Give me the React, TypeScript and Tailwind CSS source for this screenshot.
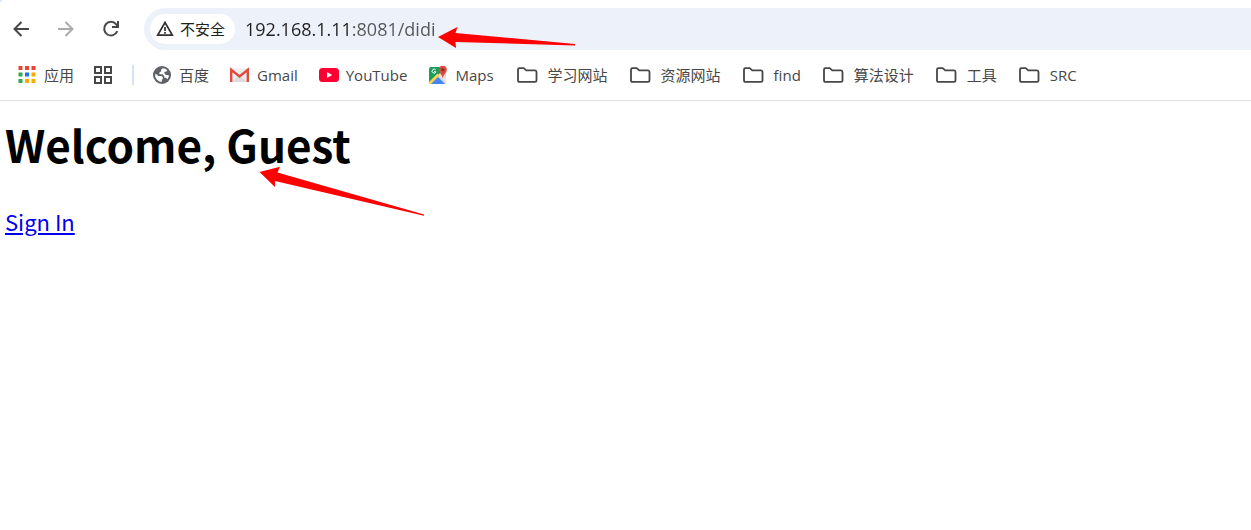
import type { ReactNode } from "react";

const folders = ["学习网站", "资源网站", "find", "算法设计", "工具", "SRC"];

const appColors = [
  "#ea4335", "#ea4335", "#ea4335",
  "#34a853", "#1a73e8", "#fbab05",
  "#34a853", "#fbab05", "#fbab05",
];

const AppsIcon = () => (
  <svg width="18" height="18" viewBox="0 0 18 18">
    {appColors.map((color, index) => (
      <rect
        key={index}
        x={(index % 3) * 6.5 + 0.5}
        y={Math.floor(index / 3) * 6.5}
        width="4"
        height="4"
        fill={color}
      />
    ))}
  </svg>
);

const TabGroupsIcon = () => (
  <svg width="20" height="20" viewBox="0 0 20 20" fill="none" stroke="#474747" strokeWidth="2">
    <rect x="2" y="2" width="6" height="6" />
    <rect x="12" y="2" width="6" height="6" />
    <rect x="2" y="12" width="6" height="6" />
    <rect x="12" y="12" width="6" height="6" />
  </svg>
);

const GlobeIcon = () => (
  <svg width="20" height="20" viewBox="0 0 20 20">
    <circle cx="10" cy="10" r="9" fill="#5f6368" />
    <path
      d="M10.8 3.2 9.2 4.4v1.8L7.4 7.4v1.8h3.2l1.7 1.7v1.8h1.8l1.2 1.6A6.9 6.9 0 0 0 17 10.6l-1.3-.7-1.7.2-1.6-1.7V6.8h1.7l1.2-1.6A7 7 0 0 0 10.8 3.2ZM3.1 9.2A7 7 0 0 0 9.8 17v-2.1l1-1.1v-1.7L9.1 11H6.3L4.5 9.2Z"
      fill="#fff"
    />
  </svg>
);

const GmailIcon = () => (
  <svg width="20" height="20" viewBox="0 0 20 20">
    <path d="M1 3.500h17V17H1z" fill="#eeeeee" />
    <path d="m2 17 7.500-7 7.500 7z" fill="#dcdcdc" />
    <path d="M1.200 17V4.800L9.500 11.500l8.300-6.700V17" fill="none" stroke="#de4b3f" strokeWidth="2.4" />
  </svg>
);

const YouTubeIcon = () => (
  <svg width="20" height="20" viewBox="0 0 20 20">
    <rect y="3" width="20" height="14" rx="3.5" fill="#ff0033" />
    <path d="M8 7v6l5.2-3z" fill="#fff" />
  </svg>
);

const MapsIcon = () => (
  <svg width="20" height="20" viewBox="0 0 20 20">
    <rect x="1" y="2" width="17" height="17" rx="1.5" fill="#d7d7d7" />
    <path d="M2.5 2H13v5L2 18.5 1 17V3.500z" fill="#1a9d5a" />
    <path d="m1 17 8.5-8.5 2 2L3.5 19H2.2Q1 19 1 17z" fill="#ffd04b" />
    <path d="m3 19 7-7 7 7z" fill="#4285f4" />
    <path d="m11 11 3-3 4 4v6z" fill="#e4e4e4" />
    <path d="M7.7 4.9A2 2 0 1 0 8 6.8H6" fill="none" stroke="#fff" strokeWidth="1" />
    <path d="M14.8.8a4 4 0 0 0-4 4c0 3.4 3.4 4.3 4 8.6.6-4.3 4-5.2 4-8.6a4 4 0 0 0-4-4z" fill="#dd4b3e" />
    <circle cx="14.8" cy="4.8" r="1.5" fill="#7c2a21" />
  </svg>
);

const FolderIcon = () => (
  <svg width="22" height="20" viewBox="0 0 22 20" fill="none" stroke="#474747" strokeWidth="1.800">
    <path d="M2 4.500Q2 3.200 3.500 3.200h4.300l2.400 2.200h8.800Q20.500 5.400 20.500 7v8.500q0 1.300-1.500 1.300H3.500Q2 16.800 2 15.500z" strokeLinejoin="round" />
  </svg>
);

const sites = [
  { name: "百度", icon: <GlobeIcon /> },
  { name: "Gmail", icon: <GmailIcon /> },
  { name: "YouTube", icon: <YouTubeIcon /> },
  { name: "Maps", icon: <MapsIcon /> },
];

const Bookmark = ({ icon, name }: { icon: ReactNode; name: string }) => (
  <a href="#" className="flex shrink-0 items-center gap-[7px]">
    {icon}
    {name}
  </a>
);

export default function App() {
  return (
    <div className="relative min-h-screen overflow-hidden bg-white font-['Open_Sans','Noto_Sans_CJK_SC',sans-serif]">
      <header className="bg-[#d3e3fd]">
        <div className="rounded-tl border-b border-[#dfe1e5] bg-white">
          {/* Toolbar */}
          <div className="flex items-center pt-2">
            <nav className="flex w-36 shrink-0 gap-[25px] pl-[11px]">
              <button aria-label="Back" className="size-5">
                <svg viewBox="0 0 20 20" fill="none" stroke="#474747" strokeWidth="2">
                  <path d="M18 10H4M10.5 3 3.5 10l7 7" />
                </svg>
              </button>
              <button aria-label="Forward" disabled className="size-5">
                <svg viewBox="0 0 20 20" fill="none" stroke="#ababab" strokeWidth="2">
                  <path d="M2 10h14M9.500 3l7 7-7 7" />
                </svg>
              </button>
              <button aria-label="Reload" className="size-5">
                <svg viewBox="0 0 20 20" fill="none" stroke="#474747" strokeWidth="2">
                  <path d="M16.300 12.200A6.800 6.800 0 1 1 15.200 5.300L17 7.500M17 2v6h-6" />
                </svg>
              </button>
            </nav>

            <div className="flex h-[42px] min-w-0 flex-1 items-center gap-[10px] rounded-l-full bg-[#ecf1fa] pl-1.5">
              <button className="flex h-[30px] shrink-0 items-center gap-[6px] rounded-full bg-white pl-1.5 pr-[10px] text-[15px] text-[#1f1f1f]">
                <svg width="18" height="18" viewBox="0 0 18 18" fill="none" stroke="#303030" strokeWidth="1.7">
                  <path d="M9 2.500 16.300 15.200H1.700z" />
                  <path d="M9 7v4M9 12v1.700" />
                </svg>
                不安全
              </button>
              {/* Host is darker than the port and path */}
              <input
                aria-label="Address"
                defaultValue="192.168.1.11:8081/didi"
                className="min-w-0 flex-1 bg-[linear-gradient(to_right,#1f1f1f_105px,#555555_105px)] bg-clip-text text-lg text-transparent outline-none"
              />
            </div>
          </div>

          {/* Bookmarks bar */}
          <div className="flex h-[50px] items-center whitespace-nowrap pl-[18px] text-[15px] text-[#474747]">
            <a href="#" className="flex shrink-0 items-center gap-2">
              <AppsIcon />
              应用
            </a>
            <button aria-label="Tab groups" className="mx-[19px] shrink-0">
              <TabGroupsIcon />
            </button>
            <div className="mr-[18px] h-5 w-0.5 shrink-0 bg-[#d3e3fd]" />
            <div className="flex gap-[21px]">
              {sites.map((site) => (
                <Bookmark key={site.name} icon={site.icon} name={site.name} />
              ))}
            </div>
            <div className="ml-[22px] flex gap-[21px]">
              {folders.map((folder) => (
                <a key={folder} href="#" className="flex shrink-0 items-center gap-[10px]">
                  <FolderIcon />
                  {folder}
                </a>
              ))}
            </div>
          </div>
        </div>
      </header>

      <main className="px-[5px] pt-3 font-['Noto_Sans_CJK_SC',sans-serif]">
        <h1 className="text-[44px]/[62px] font-bold text-black">Welcome, Guest</h1>
        <p className="mt-[30px] text-[22px]/[32px]">
          <a href="#" className="text-[#0000ee] underline">Sign In</a>
        </p>
      </main>

      {/* Annotation arrows */}
      <svg className="pointer-events-none absolute left-0 top-0" width="600" height="230" fill="#ff0000" aria-hidden="true">
        <path d="M438 37 457.500 27 455.500 33 575 44V45.500L455.500 42 456 48z" />
        <path d="M259.500 172 280 166.700 277.500 172.500 424 214.500V215.700L275 181V187z" />
      </svg>
    </div>
  );
}
